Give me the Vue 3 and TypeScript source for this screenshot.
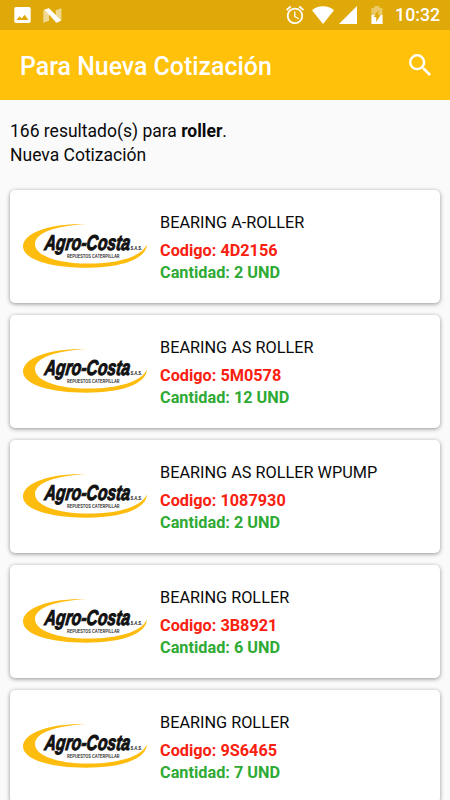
<script setup lang="ts">
interface Part {
  name: string
  code: string
  quantity: number
}

const query = 'roller'
const total = 166
const parts: Part[] = [
  { name: 'BEARING A-ROLLER', code: '4D2156', quantity: 2 },
  { name: 'BEARING AS ROLLER', code: '5M0578', quantity: 12 },
  { name: 'BEARING AS ROLLER WPUMP', code: '1087930', quantity: 2 },
  { name: 'BEARING ROLLER', code: '3B8921', quantity: 6 },
  { name: 'BEARING ROLLER', code: '9S6465', quantity: 7 },
]
</script>

<template>
  <div class="screen">
    <div class="status">
      <svg class="picture" viewBox="0 0 17 16">
        <path fill="#fff" fill-rule="evenodd" d="M2 0h13q1.700 0 1.700 1.700v12.600q0 1.700-1.700 1.700H2q-1.700 0-1.700-1.700V1.700Q.3 0 2 0zM2.500 13h12L10.700 7.800 7.600 11.600 5.500 9.200z" />
      </svg>
      <svg class="nougat" viewBox="0 0 19 15">
        <path fill="#fff" opacity=".55" d="M.3 2.500L6 .5v12.200L.3 14.700zM12.700 2.200L18.400.2v12.300l-5.700 2z" />
        <path fill="#fff" d="M1.300 1.500L6 .2l12.200 12.300-4.700 2.200z" />
      </svg>
      <span class="grow"></span>
      <svg class="alarm" viewBox="2 2 20 20">
        <path fill="#fff" d="M22 5.720l-4.600-3.860-1.290 1.530 4.600 3.860L22 5.720zM7.880 3.390L6.600 1.860 2 5.710l1.290 1.530 4.590-3.850zM12.500 8H11v6l4.750 2.850.75-1.230-4-2.370V8zM12 4c-4.970 0-9 4.030-9 9s4.020 9 9 9a9 9 0 0 0 0-18zm0 16c-3.870 0-7-3.130-7-7s3.130-7 7-7 7 3.130 7 7-3.130 7-7 7z" />
      </svg>
      <svg class="wifi" viewBox="0 0 22 18">
        <path fill="#fff" d="M0 4.200Q4.500.2 11 .2t11 4L11 18z" />
      </svg>
      <svg class="signal" viewBox="0 0 18 18"><path fill="#fff" d="M0 18L18 0v18z" /></svg>
      <svg class="battery" viewBox="0 0 12 18">
        <path fill="#fff" opacity=".38" d="M.4 2h3V0h5v2h3v7H.4z" />
        <path fill="#fff" d="M.4 9h11.200v9H.4z" />
        <path fill="#e0a90a" d="M7.300 4L2.700 11h2.500v5L9.600 9H7.300z" />
      </svg>
      <span class="clock">10:32</span>
    </div>

    <header class="bar">
      <h1>Para Nueva Cotización</h1>
      <svg class="search" viewBox="3 3 17.500 17.500">
        <path fill="#fff" d="M15.500 14h-.79l-.28-.27A6.470 6.470 0 0 0 16 9.500 6.500 6.500 0 1 0 9.500 16c1.610 0 3.090-.59 4.230-1.570l.27.28v.79l5 4.990L20.490 19l-4.990-5zm-6 0C7.010 14 5 11.990 5 9.500S7.010 5 9.500 5 14 7.010 14 9.500 11.990 14 9.500 14z" />
      </svg>
    </header>

    <main>
      <p class="summary">
        {{ total }} resultado(s) para <b>{{ query }}</b>.<br />Nueva Cotización
      </p>
      <ul class="list">
        <li v-for="part in parts" :key="part.code" class="card">
          <svg class="logo" viewBox="0 0 130 60">
            <path fill="#fdbc0e" d="M67 8C32 7 3 16 3 30.500C3 44 32 51.700 66 51.700C102 51.700 126 43 127 28.500C121 41 98 47.600 68 47.600C37 47.600 15 39.500 15 28C15 16.500 37 9.500 67 8z" />
            <g transform="translate(24 34) skewX(-7)">
              <text class="brand" x="0" y="0" textLength="85.500" lengthAdjust="spacingAndGlyphs">Agro-Costa</text>
            </g>
            <text class="suffix" x="110.500" y="34" textLength="11.500" lengthAdjust="spacingAndGlyphs">S.A.S.</text>
            <text class="tagline" x="47" y="41.800" textLength="52.500" lengthAdjust="spacingAndGlyphs">REPUESTOS CATERPILLAR</text>
          </svg>
          <div class="info">
            <div class="name">{{ part.name }}</div>
            <div class="code">Codigo: {{ part.code }}</div>
            <div class="quantity">Cantidad: {{ part.quantity }} UND</div>
          </div>
        </li>
      </ul>
    </main>
  </div>
</template>

<style>
body {
  margin: 0;
  overflow: hidden;
}
</style>

<style scoped>
.screen {
  width: 450px;
  height: 800px;
  overflow: hidden;
  background: #fafafa;
  color: #0a0a0a;
  font-family: Roboto, sans-serif;
}
svg {
  display: block;
  flex: none;
}
.status {
  box-sizing: border-box;
  display: flex;
  align-items: center;
  height: 30px;
  padding: 0 10px 0 14px;
  background: #e0a90a;
}
.picture {
  width: 17px;
  height: 16px;
}
.nougat {
  width: 19px;
  height: 15px;
  margin-left: 12px;
}
.grow {
  flex: 1;
}
.alarm {
  width: 18px;
  height: 18px;
  overflow: visible;
}
.wifi {
  width: 22px;
  height: 18px;
  margin-left: 8px;
}
.signal {
  width: 18px;
  height: 18px;
  margin-left: 5px;
}
.battery {
  width: 12px;
  height: 18px;
  margin-left: 14px;
}
.clock {
  width: 45px;
  margin-left: 12px;
  color: #fff;
  font-size: 17.700px;
  font-weight: 500;
  line-height: 32px;
  text-align: right;
  white-space: nowrap;
}
.bar {
  box-sizing: border-box;
  display: flex;
  align-items: center;
  justify-content: space-between;
  height: 70px;
  padding: 0 19px 0 20px;
  background: #ffc10a;
}
h1 {
  margin: 4px 0 0;
  color: #fff;
  font-size: 24.900px;
  font-weight: 500;
  line-height: 30px;
}
.search {
  width: 22px;
  height: 22px;
  margin-bottom: 1px;
}
.summary {
  margin: 0;
  padding: 19px 10px 23px;
  font-size: 17.500px;
  line-height: 24px;
}
.list {
  display: flex;
  flex-direction: column;
  gap: 12px;
  margin: 0;
  padding: 0 10px;
  list-style: none;
}
.card {
  box-sizing: border-box;
  display: flex;
  height: 113px;
  padding: 20px 10px;
  border-radius: 5px;
  background: #fff;
  box-shadow: 0 1px 4px rgba(0, 0, 0, 0.42);
}
.logo {
  width: 130px;
  height: 60px;
  margin-top: 6px;
  overflow: visible;
}
.brand {
  font: italic 700 21.500px "Liberation Sans Narrow", "Liberation Sans", sans-serif;
  fill: #111;
  stroke: #111;
  stroke-width: 1px;
}
.suffix {
  font: italic 700 6px "Liberation Sans", sans-serif;
  fill: #111;
}
.tagline {
  font: 500 5.500px Roboto, sans-serif;
  fill: #222;
}
.info {
  padding-left: 10px;
  font-size: 16.270px;
  line-height: 22px;
  white-space: nowrap;
}
.name {
  margin: 2px 0 6px;
}
.code,
.quantity {
  font-weight: 700;
}
.code {
  color: #fa2010;
}
.quantity {
  color: #2eaa35;
}
</style>
